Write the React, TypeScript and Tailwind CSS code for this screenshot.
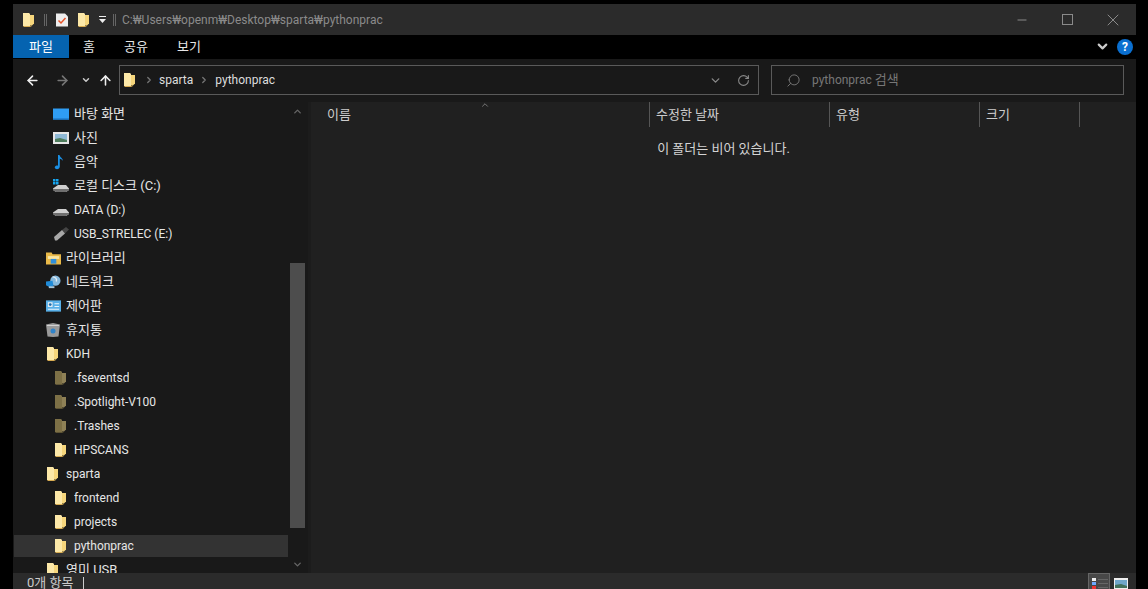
import React from 'react';
import { ArrowLeft, ArrowRight, ArrowUp, ChevronDown, ChevronUp, ChevronRight, RotateCw, Search, Minus, X } from 'lucide-react';

function FolderIcon({ dim, className = 'w-[11px] h-[14px]' }: { dim?: boolean; className?: string }) {
  return (
    <svg viewBox="0 0 11 14" className={className}>
      <path d="M0 0h6l1 1v12H0z" fill={dim ? '#7d7046' : '#fce8a8'} />
      <path d="M7 2h4v8.500L9 12.500H7z" fill={dim ? '#8f8156' : '#f6d67c'} />
      <path d="M0 13h7l2-.5V13l-2 1H1z" fill={dim ? '#5e5435' : '#d9ad52'} />
    </svg>
  );
}

function DesktopIcon() {
  return (
    <svg viewBox="0 0 16 12" className="w-4 h-3">
      <rect width="16" height="11" y="0.5" fill="#2f9df4" />
      <rect width="16" height="1.500" y="10.500" fill="#1b6db5" />
    </svg>
  );
}

function PictureIcon() {
  return (
    <svg viewBox="0 0 16 12" className="w-4 h-3">
      <rect width="16" height="12" fill="#e6e6e6" />
      <rect x="2" y="2" width="12" height="8" fill="#8fb9d6" />
      <path d="M2 7l5-1 7 2v2H2z" fill="#4f7d5d" />
    </svg>
  );
}

function MusicIcon() {
  return (
    <svg viewBox="0 0 12 16" className="w-3 h-4">
      <path d="M5 1h1.500c.4 2.500 3.500 3 3.500 6-.8-1.300-2-2-3.200-2.200V12.500C6.800 14.500 4.800 15.500 3 15c-1.700-.5-1.700-2.500 0-3.200.7-.3 1.400-.3 2 0z" fill="#1a8fe3" />
    </svg>
  );
}

function DriveIcon({ win }: { win?: boolean }) {
  return (
    <svg viewBox="0 0 16 14" className="w-4 h-[14px]">
      {win && <path d="M0 0h2.500v2.500H0zM3 0h2.500v2.500H3zM0 3h2.500v2.500H0zM3 3h2.500v2.500H3z" fill="#16a5ef" />}
      <path d="M5 6h8l3 3.500v1.500l-3 2H3l-3-2V9.500z" fill="#cfcfcf" />
      <path d="M0 10h16v1l-3 2H3l-3-2z" fill="#6f6f6f" />
    </svg>
  );
}

function UsbIcon() {
  return (
    <svg viewBox="0 0 16 14" className="w-4 h-[14px]">
      <path d="M9 3l4-3 3 2.500-4 4z" fill="#444" />
      <path d="M1 10l8-7 3 3.500-8 7H2z" fill="#a8a8a8" />
    </svg>
  );
}

function LibraryIcon() {
  return (
    <svg viewBox="0 0 16 14" className="w-[15px] h-[14px]">
      <path d="M0 1h6l1 2h9v11H0z" fill="#e9b949" />
      <rect x="2" y="5" width="12" height="3" fill="#fbe7a4" />
      <rect x="5" y="8" width="6" height="5" fill="#2f8fdc" />
    </svg>
  );
}

function NetworkIcon() {
  return (
    <svg viewBox="0 0 16 16" className="w-[15px] h-[15px]">
      <circle cx="10" cy="6" r="5.500" fill="#86b9dd" />
      <path d="M7 2c3 0 5 2 4 5" stroke="#e4eef5" strokeWidth="1.500" fill="none" />
      <path d="M0 7l7-1 1 6-4 1-4-2z" fill="#1f8bd8" />
      <rect x="3" y="12" width="6" height="2" fill="#a9c5d8" />
    </svg>
  );
}

function ControlIcon() {
  return (
    <svg viewBox="0 0 16 12" className="w-[15px] h-3">
      <rect width="16" height="12" fill="#59b0e8" />
      <rect x="2" y="2" width="5" height="5" fill="#e8eef2" />
      <circle cx="4.500" cy="4.500" r="1.500" fill="#1d6fb0" />
      <path d="M9 3h5v1H9zM9 6h5v1H9zM2 9h12v1H2z" fill="#e8f4fb" />
    </svg>
  );
}

function TrashIcon() {
  return (
    <svg viewBox="0 0 14 14" className="w-[14px] h-[14px]">
      <path d="M0 1.500L7 0l7 1.500-1.500 12-5.500.5-5.500-.5z" fill="#9a9a9a" />
      <path d="M1 2h12v1H1z" fill="#d2d2d2" />
      <circle cx="7" cy="8" r="2.500" fill="#2f83c9" />
    </svg>
  );
}

type TreeItem = { icon: React.ReactNode; label: string; level: 1 | 2; selected?: boolean };

const folder = <span className="ml-[2px] flex"><FolderIcon /></span>;
const dimFolder = <span className="ml-[2px] flex"><FolderIcon dim /></span>;
const rootFolder = <span className="ml-[1px] flex"><FolderIcon /></span>;

const tree: TreeItem[] = [
  { icon: <DesktopIcon />, label: '바탕 화면', level: 2 },
  { icon: <PictureIcon />, label: '사진', level: 2 },
  { icon: <MusicIcon />, label: '음악', level: 2 },
  { icon: <DriveIcon win />, label: '로컬 디스크 (C:)', level: 2 },
  { icon: <DriveIcon />, label: 'DATA (D:)', level: 2 },
  { icon: <UsbIcon />, label: 'USB_STRELEC (E:)', level: 2 },
  { icon: <LibraryIcon />, label: '라이브러리', level: 1 },
  { icon: <NetworkIcon />, label: '네트워크', level: 1 },
  { icon: <ControlIcon />, label: '제어판', level: 1 },
  { icon: <TrashIcon />, label: '휴지통', level: 1 },
  { icon: rootFolder, label: 'KDH', level: 1 },
  { icon: dimFolder, label: '.fseventsd', level: 2 },
  { icon: dimFolder, label: '.Spotlight-V100', level: 2 },
  { icon: dimFolder, label: '.Trashes', level: 2 },
  { icon: folder, label: 'HPSCANS', level: 2 },
  { icon: rootFolder, label: 'sparta', level: 1 },
  { icon: folder, label: 'frontend', level: 2 },
  { icon: folder, label: 'projects', level: 2 },
  { icon: folder, label: 'pythonprac', level: 2, selected: true },
  { icon: rootFolder, label: '영미 USB', level: 1 },
];

const columns = [
  { label: '이름', width: 'w-[339px] pl-[16px]' },
  { label: '수정한 날짜', width: 'w-[180px] pl-[6px]' },
  { label: '유형', width: 'w-[150px] pl-[6px]' },
  { label: '크기', width: 'w-[100px] pl-[6px]' },
];

// Korean labels run wider than the latin ones in the original
const labelSize = (label: string) => (/[가-힣]/.test(label) ? 'text-[13px] -mt-px' : 'text-[12px]');

export default function App() {
  return (
    <div className="h-[589px] w-[1148px] overflow-hidden bg-black pt-1 pl-[13px] pr-3 text-[12px] text-[#e6e6e6] font-['Roboto','Noto_Sans_CJK_KR',sans-serif]">
      <div className="flex h-[585px] flex-col">
        {/* title bar */}
        <div className="flex h-[31px] shrink-0 items-center bg-[#2b2b2b] pl-[10px]">
          <FolderIcon />
          <div className="ml-[10px] h-3 w-[3px] border-x border-[#666]" />
          <svg viewBox="0 0 12 13" className="ml-[9px] w-3 h-[14px]">
            <path d="M0 0h9l3 3v10H0z" fill="#eee" />
            <path d="M2.500 7l2.500 2.500 4.500-5" stroke="#e8552b" strokeWidth="1.500" fill="none" />
          </svg>
          <FolderIcon className="ml-[10px] w-[11px] h-[14px]" />
          <svg viewBox="0 0 8 7" className="ml-[10px] w-2 h-[7px]">
            <path d="M0 0h7v1H0zM0 3h7L3.500 7z" fill="#eee" />
          </svg>
          <div className="ml-[6px] h-3 w-[3px] border-x border-[#666]" />
          <span className="ml-[6px] text-[#8a8a8a]">C:₩Users₩openm₩Desktop₩sparta₩pythonprac</span>
          <div className="ml-auto flex items-center text-[#8a8a8a]">
            <Minus size={14} strokeWidth={1} absoluteStrokeWidth className="mr-[33px]" />
            <div className="mr-[30px] h-[11px] w-[11px] border border-[#8a8a8a]" />
            <X size={20} strokeWidth={1} absoluteStrokeWidth className="mr-[13px]" />
          </div>
        </div>

        {/* ribbon tabs */}
        <div className="flex h-[24px] shrink-0 items-start bg-black text-[13px]">
          <div className="flex h-[23px] w-[56px] items-center justify-center bg-[#0563b0] text-white">파일</div>
          <div className="flex h-[23px] w-[40px] items-center justify-center">홈</div>
          <div className="-ml-[1px] flex h-[23px] w-[56px] items-center justify-center">공유</div>
          <div className="ml-[5px] flex h-[23px] w-[40px] items-center justify-center">보기</div>
          <div className="ml-auto flex h-[23px] items-center gap-[7px] pr-[3px]">
            <ChevronDown size={15} strokeWidth={3.500} className="text-[#ccc]" />
            <div className="flex h-4 w-4 items-center justify-center rounded-full bg-[#0a6fd0] text-[12px] leading-none font-bold text-white">?</div>
          </div>
        </div>

        {/* address row */}
        <div className="flex h-[43px] shrink-0 items-center bg-[#191919] pb-[1px]">
          <ArrowLeft size={15} strokeWidth={2.500} className="ml-[12px] text-[#eee]" />
          <ArrowRight size={15} strokeWidth={2.500} className="ml-[15px] text-[#777]" />
          <ChevronDown size={10} strokeWidth={3.500} className="ml-[11px] text-[#ccc]" />
          <ArrowUp size={15} strokeWidth={2.500} className="ml-[7px] text-[#eee]" />
          <div className="ml-[6px] flex h-[30px] w-[640px] items-center border border-[#5a5a5a] pl-[4px]">
            <FolderIcon />
            <ChevronRight size={10} strokeWidth={3} className="ml-[9px] text-[#777]" />
            <span className="ml-[5px] text-[#ddd]">sparta</span>
            <ChevronRight size={10} strokeWidth={3} className="ml-[6px] text-[#777]" />
            <span className="ml-[6px] text-[#ddd]">pythonprac</span>
            <ChevronDown size={13} strokeWidth={2.500} className="ml-auto text-[#888]" />
            <RotateCw size={13} strokeWidth={2} className="ml-[15px] mr-[8px] text-[#888]" />
          </div>
          <div className="ml-[12px] flex h-[30px] w-[353px] items-center border border-[#5a5a5a] pl-[14px]">
            <Search size={15} strokeWidth={1.500} className="-scale-x-100 text-[#777]" />
            <span className="ml-[11px] text-[#777]">pythonprac <span className="text-[13px]">검색</span></span>
          </div>
        </div>

        <div className="flex min-h-0 flex-1">
          {/* navigation tree */}
          <div className="flex w-[295px] shrink-0 bg-[#191919]">
            <div className="w-[275px] overflow-hidden pl-[1px]">
              {tree.map((item) => (
                <div key={item.label} className="h-[24px] py-[1px]">
                  <div className={`flex h-[22px] items-center ${item.selected ? 'bg-[#333]' : ''} ${item.level === 1 ? 'pl-[32px]' : 'pl-[39px]'}`}>
                    <span className={`flex shrink-0 items-center ${item.level === 1 ? 'w-[20px]' : 'w-[21px]'}`}>{item.icon}</span>
                    <span className={`truncate text-[#e6e6e6] ${labelSize(item.label)}`}>{item.label}</span>
                  </div>
                </div>
              ))}
            </div>
            <div className="ml-[2px] flex w-[15px] flex-col items-center bg-[#191919]">
              <ChevronUp size={11} strokeWidth={3} className="mt-[4px] mb-[146px] text-[#666]" />
              <div className="h-[265px] w-full bg-[#4d4d4d]" />
              <ChevronDown size={11} strokeWidth={3} className="mt-[31px] text-[#666]" />
            </div>
          </div>

          {/* file list */}
          <div className="flex-1 border-l-[3px] border-[#1c1c1c] bg-[#202020] text-[13px]">
            <div className="relative flex h-[25px]">
              <ChevronUp size={10} strokeWidth={1.500} className="absolute left-[169px] -top-[2px] text-[#aaa]" />
              {columns.map((col) => (
                <div key={col.label} className={`flex items-center border-r border-[#555] text-[#ccc] ${col.width}`}>
                  {col.label}
                </div>
              ))}
            </div>
            <p className="mt-[12px] text-center text-[#d4d4d4]">이 폴더는 비어 있습니다.</p>
          </div>
        </div>

        {/* status bar */}
        <div className="flex h-[16px] shrink-0 items-start bg-[#2b2b2b] pl-[14px] text-[13px] leading-[20px]">
          <span className="text-[#ccc]">0개 항목</span>
          <div className="ml-[10px] mt-[4px] h-3 w-px bg-[#ccc]" />
          <div className="ml-auto flex items-start pr-[8px]">
            <div className="flex h-[16px] w-[22px] items-start gap-[2px] border border-b-0 border-[#666] bg-[#484848] pt-[4px] pl-[3px]">
              <div className="flex flex-col gap-[1px]">
                <span className="h-[3px] w-[4px] bg-[#eee]" />
                <span className="h-[3px] w-[4px] bg-[#6ea8ff]" />
                <span className="h-[3px] w-[4px] bg-[#e33]" />
              </div>
              <div className="flex flex-col gap-[3px] pt-[1px]">
                <span className="h-px w-[10px] bg-[#666]" />
                <span className="h-px w-[10px] bg-[#666]" />
                <span className="h-px w-[10px] bg-[#666]" />
              </div>
            </div>
            <svg viewBox="0 0 14 12" className="ml-[4px] mt-[5px] w-[14px] h-[12px]">
              <rect width="14" height="12" fill="#eee" />
              <rect x="1" y="2" width="12" height="8" fill="#6fa6c9" />
              <path d="M1 7l6-1 6 2v2H1z" fill="#42705a" />
            </svg>
          </div>
        </div>
      </div>
    </div>
  );
}
